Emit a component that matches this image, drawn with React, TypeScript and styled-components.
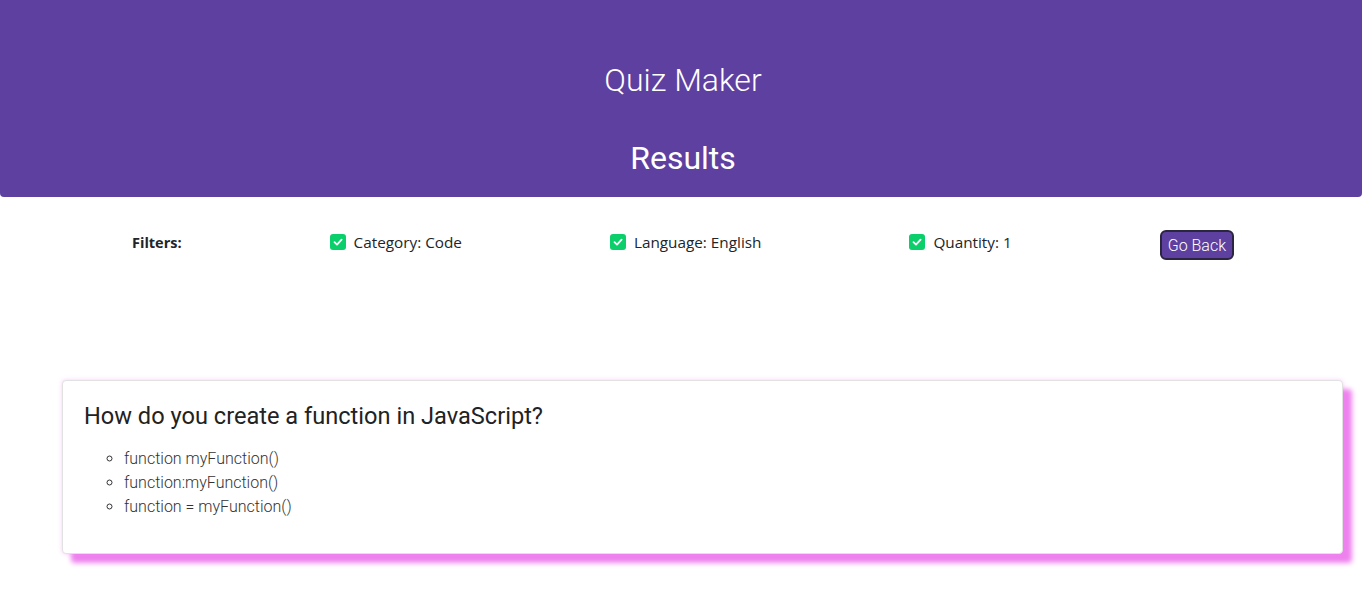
import React from "react";
import styled, { createGlobalStyle } from "styled-components";

const Global = createGlobalStyle`
  html, body { margin: 0; padding: 0; background: #fff; }
  body { font-family: Roboto, "Liberation Sans", sans-serif; }
`;

const Page = styled.div`
  display: flex;
  flex-direction: column;
  padding-bottom: 36px;
`;

const Header = styled.header`
  background: #5e40a0;
  height: 197px;
  border-radius: 0 0 4px 4px;
  display: flex;
  flex-direction: column;
  align-items: center;
  padding-left: 4px;
  color: #fff;
`;

const Title = styled.h1`
  margin: 61px 0 0;
  font-weight: 300;
  font-size: 32px;
  line-height: 38px;
`;

const Subtitle = styled.h2`
  margin: 40px 0 0;
  font-weight: 400;
  font-size: 32px;
  line-height: 38px;
`;

const FilterBar = styled.div`
  display: flex;
  justify-content: space-between;
  align-items: center;
  padding: 32px 128px 0 132px;
  height: 30px;
  font-family: "Open Sans", "Noto Sans", sans-serif;
  font-size: 15.3px;
  color: #212529;
`;

const FilterLabel = styled.span`
  font-weight: 700;
  font-size: 14.5px;
  margin-top: -3px;
`;

const FilterItem = styled.label`
  display: flex;
  align-items: center;
  gap: 8px;
  margin-top: -4px;
`;

const Check = styled.span`
  width: 16px;
  height: 16px;
  border-radius: 3px;
  background: #0bcf6a;
  display: inline-flex;
  align-items: center;
  justify-content: center;
`;

const GoBack = styled.button`
  background: #5e40a0;
  color: #fff;
  border: 2px solid #2b2540;
  border-radius: 6px;
  font-family: Roboto, sans-serif;
  font-weight: 300;
  font-size: 16px;
  height: 30px;
  padding: 0 6px;
  margin-top: 2px;
`;

const Card = styled.section`
  margin: 121px 19px 0 62px;
  background: #fff;
  border: 1px solid #e2e2e2;
  border-radius: 4px;
  height: 174px;
  box-sizing: border-box;
  padding: 21px 21px;
  box-shadow: 0 0 4px rgba(238, 130, 238, 0.4), 9px 9px 5px #ee82ee;
`;

const Question = styled.h3`
  margin: 0;
  font-weight: 400;
  font-size: 23.6px;
  line-height: 28px;
  color: #222;
`;

const Answers = styled.ul`
  margin: 17px 0 0;
  padding-left: 40px;
  list-style: circle;
  font-size: 16px;
  font-weight: 300;
  line-height: 24px;
  color: #333;
`;

const CheckIcon = () => (
  <svg width="12" height="12" viewBox="0 0 12 12">
    <path d="M2.5 6.2 L5 8.6 L9.6 3.6" fill="none" stroke="#fff" strokeWidth="1.8" strokeLinecap="round" strokeLinejoin="round" />
  </svg>
);

const filters = ["Category: Code", "Language: English", "Quantity: 1"];
const answers = ["function myFunction()", "function:myFunction()", "function = myFunction()"];

export default function App() {
  return (
    <Page>
      <Global />
      <Header>
        <Title>Quiz Maker</Title>
        <Subtitle>Results</Subtitle>
      </Header>
      <FilterBar>
        <FilterLabel>Filters:</FilterLabel>
        {filters.map((f) => (
          <FilterItem key={f}>
            <Check><CheckIcon /></Check>
            {f}
          </FilterItem>
        ))}
        <GoBack>Go Back</GoBack>
      </FilterBar>
      <Card>
        <Question>How do you create a function in JavaScript?</Question>
        <Answers>
          {answers.map((a) => (
            <li key={a}>{a}</li>
          ))}
        </Answers>
      </Card>
    </Page>
  );
}
